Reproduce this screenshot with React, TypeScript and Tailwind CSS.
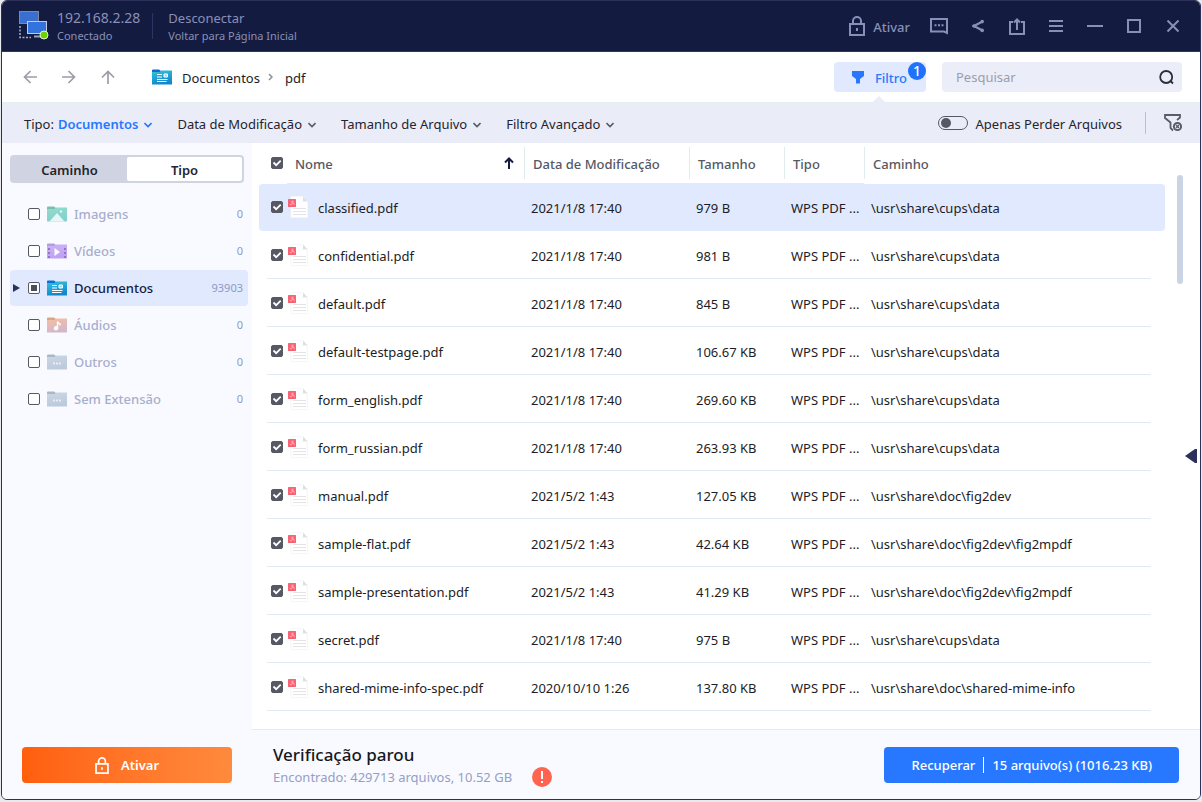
import { useState } from 'react';
import type { ReactNode } from 'react';

interface FileRow {
  name: string;
  modified: string;
  size: string;
  path: string;
}

const files: FileRow[] = [
  { name: 'classified.pdf', modified: '2021/1/8 17:40', size: '979 B', path: '\\usr\\share\\cups\\data' },
  { name: 'confidential.pdf', modified: '2021/1/8 17:40', size: '981 B', path: '\\usr\\share\\cups\\data' },
  { name: 'default.pdf', modified: '2021/1/8 17:40', size: '845 B', path: '\\usr\\share\\cups\\data' },
  { name: 'default-testpage.pdf', modified: '2021/1/8 17:40', size: '106.67 KB', path: '\\usr\\share\\cups\\data' },
  { name: 'form_english.pdf', modified: '2021/1/8 17:40', size: '269.60 KB', path: '\\usr\\share\\cups\\data' },
  { name: 'form_russian.pdf', modified: '2021/1/8 17:40', size: '263.93 KB', path: '\\usr\\share\\cups\\data' },
  { name: 'manual.pdf', modified: '2021/5/2 1:43', size: '127.05 KB', path: '\\usr\\share\\doc\\fig2dev' },
  { name: 'sample-flat.pdf', modified: '2021/5/2 1:43', size: '42.64 KB', path: '\\usr\\share\\doc\\fig2dev\\fig2mpdf' },
  { name: 'sample-presentation.pdf', modified: '2021/5/2 1:43', size: '41.29 KB', path: '\\usr\\share\\doc\\fig2dev\\fig2mpdf' },
  { name: 'secret.pdf', modified: '2021/1/8 17:40', size: '975 B', path: '\\usr\\share\\cups\\data' },
  { name: 'shared-mime-info-spec.pdf', modified: '2020/10/10 1:26', size: '137.80 KB', path: '\\usr\\share\\doc\\shared-mime-info' },
];

type FolderKind = 'image' | 'video' | 'document' | 'audio' | 'other';

const categories: { label: string; kind: FolderKind; count: number }[] = [
  { label: 'Imagens', kind: 'image', count: 0 },
  { label: 'Vídeos', kind: 'video', count: 0 },
  { label: 'Documentos', kind: 'document', count: 93903 },
  { label: 'Áudios', kind: 'audio', count: 0 },
  { label: 'Outros', kind: 'other', count: 0 },
  { label: 'Sem Extensão', kind: 'other', count: 0 },
];

const folderColors: Record<FolderKind, [string, string, string]> = {
  image: ['#7dbdb0', '#93dccb', '#86d0cf'],
  video: ['#b79be0', '#cfb3f5', '#bda2f5'],
  document: ['#0a6fd0', '#35c3dc', '#1187cf'],
  audio: ['#dba684', '#f5bfa0', '#d3b7cb'],
  other: ['#a9b8c6', '#ccd7e3', '#bccadb'],
};

function FolderIcon({ kind, id }: { kind: FolderKind; id: string }) {
  const [tab, from, to] = folderColors[kind];
  return (
    <svg width="20" height="16" viewBox="0 0 20 16" className="shrink-0" aria-hidden="true">
      <defs>
        <linearGradient id={id} x1="0" y1="0" x2=".3" y2="1">
          <stop offset="0" stopColor={from} />
          <stop offset="1" stopColor={to} />
        </linearGradient>
      </defs>
      <path d="M0 4V1.5Q0 .5 1 .5h6L9 2v2H0z" fill={tab} />
      <path d="M0 3h7.5L9 1.5h11v14H0z" fill={`url(#${id})`} />
      {kind === 'image' && (
        <>
          <path d="M2.5 15.5 10 7l7.5 8.5z" fill="#e4f7f5" />
          <circle cx="14" cy="5.5" r="1.2" fill="#e4f7f5" />
        </>
      )}
      {kind === 'video' && (
        <>
          <path d="M7.5 5v8l5.5-4z" fill="#fff" />
          <path d="M2 5v10M18 5v10" stroke="#8e78b8" strokeWidth="2" strokeDasharray="2 2" />
        </>
      )}
      {kind === 'document' && (
        <>
          <path d="M5 5.500h5M5 8h5M5 10.500h10.500M5 12.500h9.500" stroke="#fff" strokeWidth="1.2" />
          <path d="M12 5h3.500v3H12z" fill="#8fdcf0" stroke="#fff" strokeWidth="1" />
        </>
      )}
      {kind === 'audio' && (
        <>
          <path d="M10.500 11V4.500q.5 2 2.500 2.500v1.500" stroke="#fff" strokeWidth="1.4" fill="none" />
          <circle cx="9" cy="11.3" r="2.2" fill="#fff" />
        </>
      )}
      {kind === 'other' && <path d="M6 9.500h2M9 9.500h2M12 9.500h2" stroke="#e6edf4" strokeWidth="2" />}
    </svg>
  );
}

function PdfIcon() {
  return (
    <svg width="20" height="24" viewBox="0 0 20 24" className="shrink-0" aria-hidden="true">
      <path d="M3 1.500h12l4.500 5v16H3z" fill="#fff" stroke="#f6f6f7" strokeWidth="1" />
      <path d="M15 1.500 19.500 6.500H15z" fill="#dedfe2" />
      <path d="M5 13.500h13M5 16.500h13M5 19.500h13" stroke="#e3e4e6" strokeWidth="1" />
      <rect y="4" width="8" height="8" rx=".5" fill="#fb6374" />
      <path d="M2 9.800C4.500 9 5 8 5 6.200c-1-.8-1.600.4-.5 1.800.8 1 1.600 1.200 2.200 1" fill="none" stroke="#ffc3ca" strokeWidth=".9" />
    </svg>
  );
}

function LockIcon({ className }: { className: string }) {
  return (
    <svg viewBox="0 0 16 20" fill="none" stroke="currentColor" strokeWidth="2" className={className} aria-hidden="true">
      <path d="M1 8h14v11H1z" />
      <path d="M4 8V5a4 4 0 0 1 8 0v3" />
      <path d="M8 12v3" />
    </svg>
  );
}

function ComputersIcon() {
  return (
    <svg width="30" height="30" viewBox="0 0 30 30" className="shrink-0" aria-hidden="true">
      <rect x=".5" y=".5" width="19" height="12" fill="#3a6fd0" stroke="#7f87a3" />
      <path d="M1 15v11.500h11" fill="none" stroke="#a9b0c8" strokeWidth="1.5" strokeDasharray="2 1.5" />
      <rect x="8.5" y="10.5" width="19" height="12" fill="#3273e0" stroke="#c4cada" />
      <path d="M15 25.500h8" stroke="#9aa2bb" strokeWidth="2" />
      <circle cx="25" cy="24" r="4" fill="#6ad400" stroke="#e3f2d8" />
    </svg>
  );
}

function ChevronDown({ className = '' }: { className?: string }) {
  return (
    <svg width="8" height="6" viewBox="0 0 8 6" fill="none" stroke="currentColor" strokeWidth="1.6" className={className} aria-hidden="true">
      <path d="m.5 1 3.500 3.500L7.500 1" />
    </svg>
  );
}

function NavArrow({ className = '' }: { className?: string }) {
  return (
    <svg width="14" height="14" viewBox="0 0 14 14" fill="none" stroke="currentColor" strokeWidth="1.7" className={className} aria-hidden="true">
      <path d="M14 7H1.500M7.500 1l-6 6 6 6" />
    </svg>
  );
}

function IconButton({ label, children }: { label: string; children: ReactNode }) {
  return (
    <button type="button" aria-label={label} className="flex w-5 items-center justify-center hover:text-white">
      {children}
    </button>
  );
}

interface CheckboxProps {
  label: string;
  checked: boolean;
  partial?: boolean;
  onChange: () => void;
}

function Checkbox({ label, checked, partial, onChange }: CheckboxProps) {
  return (
    <span className="grid size-3 shrink-0 place-items-center">
      <input
        type="checkbox"
        aria-label={label}
        checked={checked}
        onChange={onChange}
        className={`col-start-1 row-start-1 size-3 appearance-none rounded-xs border border-[#565864] ${checked && !partial ? 'bg-[#565864]' : 'bg-white'}`}
      />
      {checked && !partial && (
        <svg viewBox="0 0 12 12" fill="none" stroke="#fff" strokeWidth="1.8" className="pointer-events-none col-start-1 row-start-1 size-3">
          <path d="m2.500 5.500 2.700 2.700 4.500-4.500" />
        </svg>
      )}
      {partial && checked && <span className="pointer-events-none col-start-1 row-start-1 size-1.5 bg-[#4c4e5a]" />}
    </span>
  );
}

function TitleBar() {
  return (
    <header className="flex h-[51px] shrink-0 items-center border-b border-[#2d3560] bg-[#141b40] px-[17px] text-[#8890b8]">
      <ComputersIcon />
      <div className="ml-2 pr-3">
        <p className="text-sm leading-[18px]">192.168.2.28</p>
        <p className="text-[11px] leading-[17px]">Conectado</p>
      </div>
      <div className="h-[26px] w-px bg-[#2d3560]" />
      <div className="ml-[15px] flex flex-col items-start">
        <button type="button" className="text-[13px] leading-[18px]">Desconectar</button>
        <a href="#inicio" className="text-[11px] leading-[17px]">Voltar para Página Inicial</a>
      </div>
      <div className="ml-auto flex items-center gap-[19px]">
        <button type="button" className="flex items-center gap-2 text-[13px] font-medium">
          <LockIcon className="h-5 w-4" />
          <span className="pt-[3px]">Ativar</span>
        </button>
        <IconButton label="Comentários">
          <svg width="18" height="17" viewBox="0 0 18 17" fill="none" stroke="currentColor" strokeWidth="2">
            <path d="M1 1h16v14l-3-1.500H1z" />
            <path d="M4.500 7.200h2M8 7.200h2M11.500 7.200h2" />
          </svg>
        </IconButton>
        <IconButton label="Compartilhar">
          <svg width="12" height="14" viewBox="0 0 12 14" fill="none" stroke="currentColor" strokeWidth="2.2">
            <path d="M10.500 2.500 2 7l8.500 4.500" />
            <circle cx="2" cy="7" r="1.8" fill="currentColor" stroke="none" />
            <circle cx="10.2" cy="2.6" r="1.8" fill="currentColor" stroke="none" />
            <circle cx="10.2" cy="11.4" r="1.8" fill="currentColor" stroke="none" />
          </svg>
        </IconButton>
        <IconButton label="Exportar">
          <svg width="16" height="17" viewBox="0 0 16 17" fill="none" stroke="currentColor" strokeWidth="2">
            <path d="M4 4H1v12h14V4h-3M8 12V2M5 4.500l3-3 3 3" />
          </svg>
        </IconButton>
        <IconButton label="Menu">
          <svg width="14" height="12" viewBox="0 0 14 12" stroke="currentColor" strokeWidth="2">
            <path d="M0 1h14M0 6h14M0 11h14" />
          </svg>
        </IconButton>
        <IconButton label="Minimizar">
          <svg width="16" height="2" viewBox="0 0 16 2" stroke="currentColor" strokeWidth="2">
            <path d="M0 1h16" />
          </svg>
        </IconButton>
        <IconButton label="Maximizar">
          <svg width="14" height="14" viewBox="0 0 14 14" fill="none" stroke="currentColor" strokeWidth="2">
            <path d="M1 1h12v12H1z" />
          </svg>
        </IconButton>
        <IconButton label="Fechar">
          <svg width="12" height="12" viewBox="0 0 12 12" stroke="currentColor" strokeWidth="2">
            <path d="m.5.5 11 11M11.500.5l-11 11" />
          </svg>
        </IconButton>
      </div>
    </header>
  );
}

function NavBar() {
  return (
    <div className="flex h-[50px] shrink-0 items-center bg-white pr-[18px] pl-[21px] text-[13px]">
      <div className="flex items-center gap-[25px] text-[#9b9da8]">
        <button type="button" aria-label="Voltar"><NavArrow /></button>
        <button type="button" aria-label="Avançar"><NavArrow className="rotate-180" /></button>
        <button type="button" aria-label="Acima"><NavArrow className="rotate-90" /></button>
      </div>
      <nav className="ml-[37px] flex items-center text-[#1c1d26]">
        <FolderIcon kind="document" id="crumb-folder" />
        <a href="#documentos" className="ml-[10px] pt-[3px]">Documentos</a>
        <svg width="5" height="8" viewBox="0 0 5 8" fill="none" stroke="#8d8f9a" strokeWidth="1.5" className="ml-2">
          <path d="m1 1 3 3-3 3" />
        </svg>
        <span className="ml-3 pt-[3px]">pdf</span>
      </nav>
      <button type="button" className="relative ml-auto flex h-[30px] items-center gap-[10px] rounded-sm bg-[#e0e9fe] pr-[19px] pl-[17px] font-medium text-[#2878ff]">
        <svg width="14" height="13" viewBox="0 0 14 13" fill="currentColor" aria-hidden="true">
          <path d="M1 0h12v5L9 8v4.500H5V8L1 5z" />
        </svg>
        <span className="pt-[3px]">Filtro</span>
        <span className="absolute top-0 right-0 flex size-[18px] items-center justify-center rounded-full bg-[#2172fb] text-sm text-white">1</span>
        <span className="absolute -bottom-[11px] left-[38px] border-x-[7px] border-b-[7px] border-x-transparent border-b-[#eaecf7]" />
      </button>
      <label className="ml-4 flex h-[30px] w-60 items-center rounded-sm bg-[#ebeef9] pr-2 pl-[14px]">
        <input type="search" aria-label="Pesquisar" placeholder="Pesquisar" className="min-w-0 flex-1 bg-transparent pt-0.5 outline-none placeholder:text-[#9a9dac]" />
        <svg width="15" height="15" viewBox="0 0 15 15" fill="none" stroke="#2c2e3c" strokeWidth="1.8" aria-hidden="true">
          <circle cx="7.2" cy="7" r="6" />
          <path d="m11 10.500 3 3" />
        </svg>
      </label>
    </div>
  );
}

function FilterBar() {
  const [onlyLost, setOnlyLost] = useState(false);

  return (
    <div className="flex h-[41px] shrink-0 items-center gap-[25px] border-t border-[#e2eef0] bg-[#eaecf7] pr-[17px] pl-[22px] text-[13px] text-[#23242f]">
      <button type="button" className="flex items-center pt-[3px]">
        Tipo:
        <span className="ml-1 flex items-center gap-1.5 font-semibold text-[#2878ff]">
          Documentos
          <ChevronDown />
        </span>
      </button>
      {['Data de Modificação', 'Tamanho de Arquivo', 'Filtro Avançado'].map((label) => (
        <button key={label} type="button" className="flex items-center gap-1.5 pt-[3px]">
          {label}
          <ChevronDown className="text-[#5a5c68]" />
        </button>
      ))}
      <label className="ml-auto flex items-center gap-2">
        <input
          type="checkbox"
          role="switch"
          checked={onlyLost}
          onChange={() => setOnlyLost(!onlyLost)}
          className="flex h-[14px] w-[30px] appearance-none items-center rounded-full border border-[#565864] px-0.5 before:size-[10px] before:rounded-full before:bg-[#565864] checked:before:ml-auto"
        />
        <span className="pt-[3px]">Apenas Perder Arquivos</span>
      </label>
      <div className="-ml-0.5 flex items-center gap-[18px]">
        <div className="h-[22px] w-px bg-[#bcc0cf]" />
        <button type="button" aria-label="Limpar filtros" className="text-[#5a5c68]">
          <svg width="19" height="18" viewBox="0 0 19 18" fill="none" stroke="currentColor" strokeWidth="1.8">
            <path d="M9 16.500 6.500 14V8.500L1 4V1h15v2.500l-3 2.500" />
            <circle cx="13.5" cy="12.5" r="3.6" strokeWidth="2" />
            <path d="m12 11 3 3M15 11l-3 3" strokeWidth="1.4" />
          </svg>
        </button>
      </div>
    </div>
  );
}

function Sidebar() {
  const [tab, setTab] = useState('Tipo');
  const [checked, setChecked] = useState<string[]>(['Documentos']);

  function toggle(label: string) {
    setChecked(checked.includes(label) ? checked.filter((c) => c !== label) : [...checked, label]);
  }

  return (
    <aside className="flex w-[250px] shrink-0 flex-col bg-[#f9faff] pt-3 pb-4 pl-2 text-[13px]">
      <div className="mr-2 flex h-7 rounded-sm bg-[#d0d4e2] p-0.5 font-semibold text-[#23242f]">
        {['Caminho', 'Tipo'].map((label) => (
          <button
            key={label}
            type="button"
            onClick={() => setTab(label)}
            className={`flex-1 rounded-xs pt-[3px] ${tab === label ? 'bg-white' : ''}`}
          >
            {label}
          </button>
        ))}
      </div>

      <ul className="mt-[13px] mr-1 flex flex-col gap-px">
        {categories.map((category) => {
          const active = category.kind === 'document';
          return (
            <li
              key={category.label}
              className={`flex h-9 items-center rounded-sm pr-[5px] pl-[3px] ${active ? 'bg-[#e0e9fe] text-[#141b40]' : 'text-[#a8aecd]'}`}
            >
              <span className="w-[15px]">
                {active && (
                  <svg width="7" height="8" viewBox="0 0 7 8" fill="#2b315a">
                    <path d="M0 0 7 4 0 8z" />
                  </svg>
                )}
              </span>
              <Checkbox
                label={category.label}
                checked={checked.includes(category.label)}
                partial={active}
                onChange={() => toggle(category.label)}
              />
              <span className="ml-[7px]">
                <FolderIcon kind={category.kind} id={`folder-${category.label.slice(0, 3)}`} />
              </span>
              <span className="ml-[7px] pt-0.5 font-medium">{category.label}</span>
              <span className="ml-auto text-[11px] text-[#8f99c4]">{category.count}</span>
            </li>
          );
        })}
      </ul>

      <button
        type="button"
        className="mt-auto mr-5 ml-3 flex h-9 items-center justify-center gap-3 rounded-sm bg-linear-to-r from-[#ff5f0c] to-[#ff8a3c] font-semibold text-white"
      >
        <LockIcon className="h-[17px] w-3.5" />
        <span className="pt-0.5">Ativar</span>
      </button>
    </aside>
  );
}

function ColumnTitle({ children }: { children: ReactNode }) {
  return <div className="flex h-8 items-center border-l border-[#e0edee] pt-[3px] pl-2">{children}</div>;
}

function FileTable() {
  const [selected, setSelected] = useState<string[]>(files.map((f) => f.name));

  function toggle(name: string) {
    setSelected(selected.includes(name) ? selected.filter((n) => n !== name) : [...selected, name]);
  }

  function toggleAll() {
    setSelected(selected.length === files.length ? [] : files.map((f) => f.name));
  }

  return (
    <table className="w-full table-fixed text-left text-[13px]">
      <thead className="text-[#565864]">
        <tr className="h-10">
          <th className="w-7 pl-3">
            <Checkbox label="Selecionar tudo" checked={selected.length === files.length} onChange={toggleAll} />
          </th>
          <th className="w-[237px] font-medium">
            <div className="flex items-center justify-between pr-[10px] pl-2">
              <span className="pt-[3px]">Nome</span>
              <svg width="10" height="12" viewBox="0 0 10 12" fill="none" stroke="#141b40" strokeWidth="2" aria-hidden="true">
                <path d="M5 12V1.500M1 5.500l4-4 4 4" />
              </svg>
            </div>
          </th>
          <th className="w-[165px] font-medium"><ColumnTitle>Data de Modificação</ColumnTitle></th>
          <th className="w-[95px] font-medium"><ColumnTitle>Tamanho</ColumnTitle></th>
          <th className="w-20 font-medium"><ColumnTitle>Tipo</ColumnTitle></th>
          <th className="font-medium"><ColumnTitle>Caminho</ColumnTitle></th>
        </tr>
      </thead>
      <tbody className="text-[#1c1d26]">
        {files.map((file, i) => (
          <tr
            key={file.name}
            className={
              i === 0
                ? 'h-12 *:border-t *:border-transparent *:bg-[#e0e9fe] *:bg-clip-padding *:first:rounded-l-sm *:last:rounded-r-sm'
                : 'relative h-12 *:first:after:absolute *:first:after:right-[14px] *:first:after:bottom-0 *:first:after:left-2 *:first:after:h-px *:first:after:bg-[#dfe9f8]'
            }
          >
            <td className="pl-3">
              <Checkbox label={file.name} checked={selected.includes(file.name)} onChange={() => toggle(file.name)} />
            </td>
            <td>
              <div className="flex items-center gap-[10px] pl-px">
                <PdfIcon />
                <span className="pt-[3px]">{file.name}</span>
              </div>
            </td>
            <td className="pt-[3px] pl-[7px]">{file.modified}</td>
            <td className="pt-[3px] pl-[7px]">{file.size}</td>
            <td className="pt-[3px] pl-[7px] whitespace-nowrap">WPS PDF ...</td>
            <td className="pt-[3px] pl-[7px]">{file.path}</td>
          </tr>
        ))}
      </tbody>
    </table>
  );
}

function StatusBar() {
  return (
    <footer className="flex h-[70px] shrink-0 items-center justify-between border-t border-[#e0ecee] bg-[#f9faff] px-[21px]">
      <div>
        <p className="text-[17px] leading-6 font-medium text-[#16171f]">Verificação parou</p>
        <div className="flex items-center gap-5">
          <p className="text-[13px] leading-5 text-[#959ec6]">Encontrado: 429713 arquivos, 10.52 GB</p>
          <svg width="20" height="20" viewBox="0 0 20 20" aria-hidden="true">
            <circle cx="10" cy="10" r="10" fill="#ff6450" />
            <path d="M10 4v8M10 14v2" stroke="#fff" strokeWidth="2" />
          </svg>
        </div>
      </div>
      <button type="button" className="flex h-9 items-center rounded-sm bg-[#2878ff] px-[27px] text-[13px] font-medium text-white">
        <span className="pt-0.5">Recuperar</span>
        <span className="mx-2 h-4 w-px bg-white" />
        <span className="pt-0.5">15 arquivo(s) (1016.23 KB)</span>
      </button>
    </footer>
  );
}

export default function App() {
  return (
    <div className="flex h-screen bg-[#e9eaee] px-px pb-0.5 font-['Noto_Sans','Open_Sans',sans-serif]">
      <div className="flex min-w-0 flex-1 flex-col overflow-hidden rounded-md border border-[#2b3158] bg-white">
        <TitleBar />
        <NavBar />
        <FilterBar />
        <div className="flex min-h-0 flex-1">
          <Sidebar />
          <main className="flex min-w-0 flex-1 flex-col">
            <div className="flex min-h-0 flex-1 pr-[3px] pl-[7px]">
              <div className="min-w-0 flex-1 overflow-hidden">
                <FileTable />
              </div>
              <div className="mt-8 ml-3 h-[109px] w-1.5 rounded-full bg-[#cbd4e4]" />
              <button type="button" aria-label="Mostrar painel" className="mt-10 ml-0.5 self-center">
                <svg width="12" height="14" viewBox="0 0 12 14" fill="#2b315a">
                  <path d="M0 7 10 0h2v14h-2z" />
                </svg>
              </button>
            </div>
            <StatusBar />
          </main>
        </div>
      </div>
    </div>
  );
}
